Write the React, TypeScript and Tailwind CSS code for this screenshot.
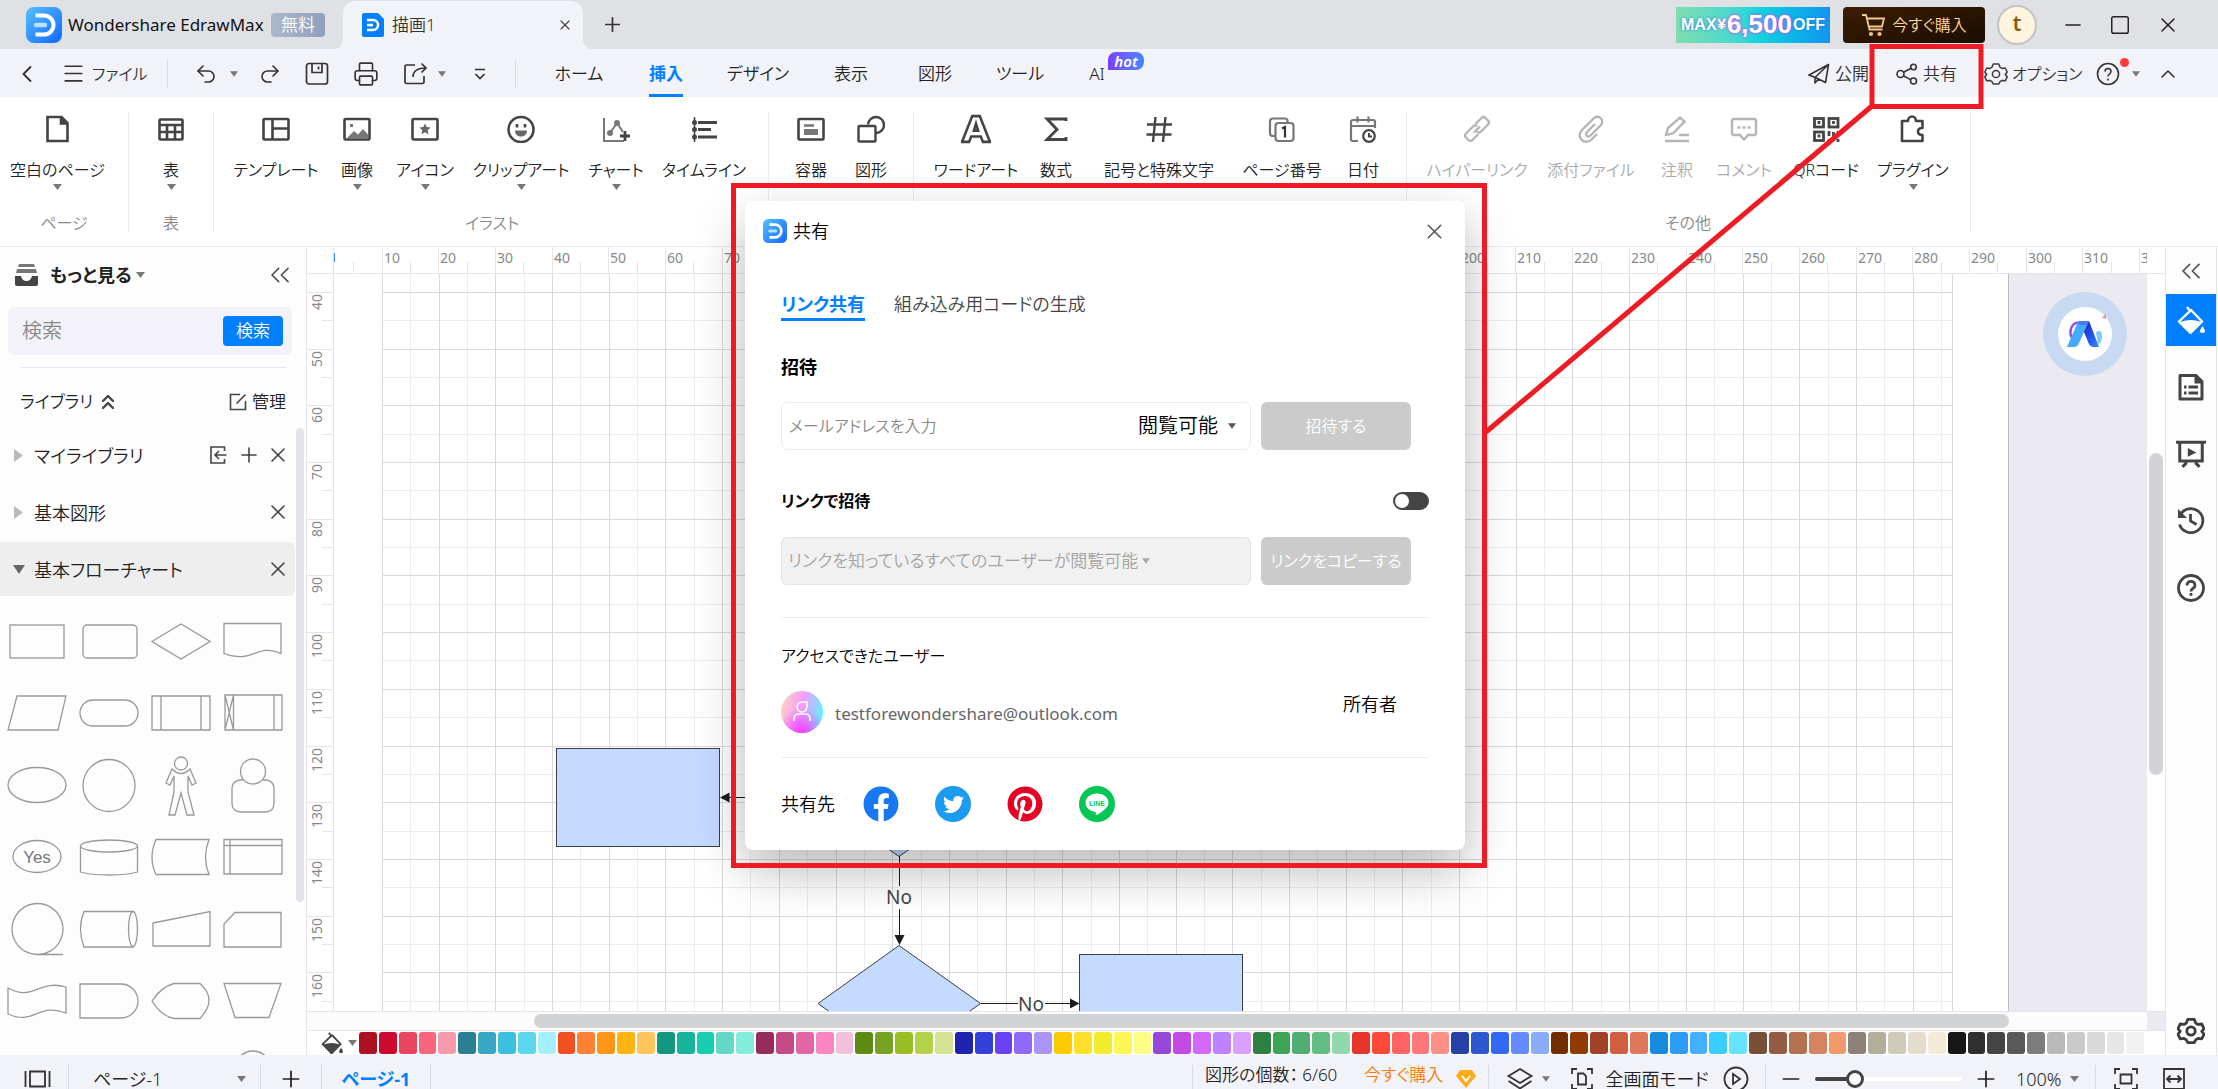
import React from 'react';
import {
  ChevronLeft, ChevronsLeft, ChevronsUp, ChevronUp, Menu, Minus, Plus, Printer, Redo2, Square, Undo2, X,
} from 'lucide-react';
import { FaFacebook, FaPinterest, FaTwitter } from 'react-icons/fa';

type Children = { children: React.ReactNode };

/* ---------- small shared pieces ---------- */

function Caret({ small = false, color = '#777' }: { small?: boolean; color?: string }) {
  return (
    <svg width={small ? 8 : 9} height={6} viewBox="0 0 9 6" className="shrink-0" aria-hidden="true">
      <path d="M0 0h9L4.5 6z" fill={color} />
    </svg>
  );
}

function Divider() {
  return <div className="h-7 w-px shrink-0 bg-[#d9dade]" />;
}

function Logo({ size }: { size: number }) {
  return (
    <svg width={size} height={size} viewBox="0 0 36 36" className="shrink-0" aria-hidden="true">
      <defs>
        <linearGradient id="logoFill" x1="0" y1="0" x2="1" y2="1">
          <stop offset="0" stopColor="#55bfff" />
          <stop offset="1" stopColor="#1168ff" />
        </linearGradient>
      </defs>
      <rect width="36" height="36" rx="8" fill="url(#logoFill)" />
      <path d="M9.500 8.500H18a9.500 9.500 0 0 1 0 19H9.500" fill="none" stroke="#fff" strokeWidth="4" />
      <path d="M10 18h9" stroke="#b9e0ff" strokeWidth="4.500" strokeLinecap="round" />
    </svg>
  );
}

function Glyph({ children, size = 28, color = '#444', width = 2.6 }: Children & { size?: number; color?: string; width?: number }) {
  return (
    <svg
      width={size}
      height={size}
      viewBox="0 0 28 28"
      fill="none"
      stroke={color}
      strokeWidth={width}
      className="shrink-0"
      aria-hidden="true"
    >
      {children}
    </svg>
  );
}

const gearPath =
  'M10.500 2h7l1.500 4 2.500 1.500 4-.5 2.500 5-2.500 3v0l2.500 3-2.500 5-4-.5L19 24l-1.500 3h-7L9 24l-2.500-1.500-4 .5L0 18l2.500-3L0 12l2.500-5 4 .5L9 6z';

function Gear({ size = 24, width = 2 }: { size?: number; width?: number }) {
  return (
    <svg width={size} height={size} viewBox="-1 0 30 29" fill="none" stroke="#3c3c3c" strokeWidth={width} strokeLinejoin="round" className="shrink-0" aria-hidden="true">
      <path d={gearPath} />
      <circle cx="14" cy="14.500" r="4.500" />
    </svg>
  );
}

/* ---------- title bar ---------- */

function TitleBar() {
  return (
    <header className="flex h-[49px] shrink-0 items-center bg-[#e0e1e5] pl-[26px]">
      <Logo size={36} />
      <span className="ml-[6px] w-[196px] text-[17px] font-normal whitespace-nowrap text-[#111]">Wondershare EdrawMax</span>
      <span className="ml-[7px] flex h-6 w-[54px] items-center justify-center rounded bg-linear-to-r from-[#a9b9cb] to-[#8f9fbe] text-[17px] text-white">
        無料
      </span>
      <div className="relative ml-[18px] mt-px flex h-12 w-[240px] items-center rounded-t-xl bg-[#f2f3f9] pl-[19px] pr-[10px]">
        <svg className="absolute bottom-0 -left-2" width="8" height="8" viewBox="0 0 8 8" aria-hidden="true"><path d="M8 0v8H0q6-1 8-8z" fill="#f2f3f9" /></svg>
        <svg className="absolute -right-2 bottom-0" width="8" height="8" viewBox="0 0 8 8" aria-hidden="true"><path d="M0 0v8h8q-6-1-8-8z" fill="#f2f3f9" /></svg>
        <svg width="22" height="24" viewBox="0 0 22 24" aria-hidden="true">
          <path d="M2 0h14l6 6v16q0 2-2 2H2q-2 0-2-2V2q0-2 2-2z" fill="#0080ff" />
          <path d="M5 7h6a5 5 0 0 1 0 10H5M5 12h6" fill="none" stroke="#fff" strokeWidth="2.500" />
        </svg>
        <span className="ml-2 flex-1 text-[17px] text-[#333]">描画1</span>
        <button aria-label="タブを閉じる"><X size={16} strokeWidth={1.8} color="#444" /></button>
      </div>
      <button aria-label="新しいタブ" className="ml-[18px]"><Plus size={23} strokeWidth={1.8} color="#333" /></button>
      <div className="flex-1" />
      <a href="#sale" className="flex h-9 w-[154px] items-center justify-center gap-px overflow-hidden bg-linear-to-r from-[#7fdcae] via-[#18d8dc] to-[#1593f0] font-['Liberation_Sans_Narrow','Liberation_Sans',sans-serif] font-bold text-white">
        <span className="text-[16px] [text-shadow:0_0_3px_#1a6fe0]">MAX</span>
        <span className="text-[15px] [text-shadow:0_0_3px_#e03ce0]">¥</span>
        <span className="text-[26px] [text-shadow:0_0_3px_#e83cf0,0_0_2px_#e83cf0]">6,500</span>
        <span className="text-[16px] [text-shadow:0_0_3px_#1a6fe0]">OFF</span>
      </a>
      <button className="ml-[13px] flex h-9 w-[142px] items-center justify-center gap-[6px] rounded bg-linear-to-br from-[#3c1d02] to-[#1a0d01] text-[16px] text-[#ffd49a]">
        <svg width="25" height="25" viewBox="0 0 25 25" fill="none" stroke="#f5c78c" strokeWidth="1.800" aria-hidden="true">
          <path d="M1 3h4l3.500 14.500h13M5.500 6.500H23l-2 8H8" />
          <circle cx="10" cy="22" r="1.200" /><circle cx="18.500" cy="22" r="1.200" />
        </svg>
        今すぐ購入
      </button>
      <button className="ml-3 flex size-10 items-center justify-center rounded-full border-2 border-[#c4c4c6] bg-[#fdf5dd] pb-1 text-[22px] font-semibold text-[#8a5a16]">
        t
      </button>
      <button aria-label="最小化" className="ml-6"><Minus size={24} strokeWidth={1.6} color="#222" /></button>
      <button aria-label="最大化" className="ml-6"><Square size={22} strokeWidth={1.6} color="#222" /></button>
      <button aria-label="閉じる" className="mr-[38px] ml-[25px]"><X size={24} strokeWidth={1.5} color="#222" /></button>
    </header>
  );
}

/* ---------- menu bar ---------- */

const menuTabs: { label: string; cell: string; active?: boolean; hot?: boolean }[] = [
  { label: 'ホーム', cell: 'w-[86px]' },
  { label: '挿入', cell: 'w-[88px]', active: true },
  { label: 'デザイン', cell: 'w-[96px]' },
  { label: '表示', cell: 'w-[90px]' },
  { label: '図形', cell: 'w-[78px]' },
  { label: 'ツール', cell: 'w-[92px]' },
  { label: 'AI', cell: 'w-[62px]', hot: true },
];

function MenuBar() {
  return (
    <nav className="flex h-12 shrink-0 items-center bg-[#f2f3f9] pt-px pl-[13px] text-[17px] text-[#333]">
      <button aria-label="戻る"><ChevronLeft size={28} strokeWidth={1.6} /></button>
      <button className="ml-5 flex w-[88px] items-center gap-[6px] text-[16px] whitespace-nowrap">
        <Menu size={25} strokeWidth={1.6} className="shrink-0" />ファイル
      </button>
      <div className="flex-none basis-[18px]" />
      <Divider />
      <button className="ml-[26px] flex items-center gap-3" aria-label="元に戻す">
        <Undo2 size={24} strokeWidth={1.6} /><Caret small />
      </button>
      <button className="ml-5" aria-label="やり直し"><Redo2 size={24} strokeWidth={1.6} /></button>
      <button className="ml-[23px]" aria-label="保存">
        <svg width="24" height="24" viewBox="0 0 24 24" fill="none" stroke="#333" strokeWidth="1.700" aria-hidden="true">
          <rect x="1.500" y="1.500" width="21" height="20.500" rx="2.500" /><path d="M7 2v8.500h10V2M13.500 4.500v3" />
        </svg>
      </button>
      <button className="ml-6" aria-label="印刷"><Printer size={26} strokeWidth={1.5} /></button>
      <button className="ml-6 flex items-center gap-[9px]" aria-label="エクスポート">
        <svg width="26" height="24" viewBox="0 0 26 24" fill="none" stroke="#333" strokeWidth="1.700" aria-hidden="true">
          <path d="M12 3H3.500q-1.500 0-1.500 1.500V20q0 1.500 1.500 1.500h16q1.500 0 1.500-1.500v-6M10 15c0-6 5-9 13-9M18.500 1.500L23 6l-4.500 4.500" />
        </svg>
        <Caret small />
      </button>
      <button className="ml-[27px]" aria-label="クイックアクセス">
        <svg width="14" height="14" viewBox="0 0 14 14" fill="none" stroke="#333" strokeWidth="1.700" aria-hidden="true">
          <path d="M2 2.500h10M2.500 7L7 11.500 11.500 7" />
        </svg>
      </button>
      <div className="flex-none basis-7" />
      <Divider />
      <div className="ml-5 flex h-full">
        {menuTabs.map((t) => (
          <button key={t.label} className={`relative flex h-full items-center justify-center whitespace-nowrap ${t.cell}`}>
            <span
              className={
                t.active
                  ? 'flex h-full items-center border-b-[3px] border-[#0080ff] pt-[3px] font-bold text-[#0080ff]'
                  : 'text-[#222]'
              }
            >
              {t.label}
            </span>
            {t.hot && (
              <span className="absolute top-[2px] left-[42px] flex h-[18px] w-9 items-center justify-center rounded-lg rounded-bl-none bg-linear-to-r from-[#7a3cff] to-[#3f86ff] text-[15px] font-semibold text-white italic">
                hot
              </span>
            )}
          </button>
        ))}
      </div>
      <div className="flex-1" />
      <button className="flex items-center gap-[5px] whitespace-nowrap">
        <svg width="22" height="22" viewBox="0 0 22 22" fill="none" stroke="#333" strokeWidth="1.600" strokeLinejoin="round" aria-hidden="true">
          <path d="M20.500 1.500L1 12l6 2.500 13.500-13L17.500 19.500l-7-3.500M7 14.500V20l3.500-4z" />
        </svg>
        公開
      </button>
      <button className="ml-[26px] flex items-center gap-1 whitespace-nowrap">
        <svg width="24" height="24" viewBox="0 0 24 24" fill="none" stroke="#333" strokeWidth="1.600" aria-hidden="true">
          <circle cx="5.500" cy="12" r="3.500" /><circle cx="18.500" cy="5" r="2.800" /><circle cx="18.500" cy="19" r="3" />
          <path d="M8.500 10.200L16 6.300M8.500 14l7.300 3.600" />
        </svg>
        共有
      </button>
      <button className="ml-[27px] flex w-[100px] items-center gap-1 text-[16px] whitespace-nowrap">
        <Gear size={24} width={1.900} />オプション
      </button>
      <button className="relative ml-3 flex items-center gap-3" aria-label="ヘルプ">
        <svg width="24" height="24" viewBox="0 0 24 24" fill="none" stroke="#333" strokeWidth="1.600" aria-hidden="true">
          <circle cx="12" cy="12" r="10.500" /><path d="M9 9.500c0-4 6-4 6 0 0 2.500-3 2.500-3 5M12 16.500v2" />
        </svg>
        <Caret small />
        <span className="absolute -top-1 left-[24px] size-[9px] rounded-full bg-[#ff3b3b]" />
      </button>
      <button className="mr-[38px] ml-4" aria-label="リボンを折りたたむ"><ChevronUp size={24} strokeWidth={1.6} /></button>
    </nav>
  );
}

/* ---------- ribbon ---------- */

type Tool = { label: string; cell: string; icon: React.ReactNode; menu?: boolean; off?: boolean };

const grey = '#b5b5b5';

const ribbonGroups: { name: string; box: string; tools: Tool[] }[] = [
  {
    name: 'ページ', box: 'w-[129px] pl-0',
    tools: [{
      label: '空白のページ', cell: 'w-[115px]', menu: true,
      icon: <Glyph><path d="M3.500 2h14l6 6v18h-20z" /><path d="M17 2v6.500h6" fill="#444" /></Glyph>,
    }],
  },
  {
    name: '表', box: 'w-[85px] pl-3',
    tools: [{
      label: '表', cell: 'w-[60px]', menu: true,
      icon: <Glyph><rect x="2.500" y="4.500" width="23" height="20" rx="1" /><path d="M2 10h24M2 17h24M10 10v15M18 10v15" /></Glyph>,
    }],
  },
  {
    name: 'イラスト', box: 'w-[555px] pl-[18px]',
    tools: [
      { label: 'テンプレート', cell: 'w-[88px]', icon: <Glyph><rect x="1.500" y="4" width="25" height="20.500" rx="1" /><path d="M10.500 4v20M10.500 13.500h16" /></Glyph> },
      {
        label: '画像', cell: 'w-[74px]', menu: true,
        icon: <Glyph><rect x="1.500" y="4" width="25" height="20.500" rx="1" /><path d="M4 23l7-7 4 3.500 5-5.500 5 5.500V23z" fill="#777" stroke="none" /><rect x="7" y="9" width="3" height="3" fill="#777" stroke="none" /></Glyph>,
      },
      {
        label: 'アイコン', cell: 'w-[62px]', menu: true,
        icon: <Glyph><rect x="1.500" y="4" width="25" height="20.500" rx="1" /><path d="M14 8.500l1.700 3.600 3.900.5-2.900 2.700.8 3.900-3.500-1.900-3.500 1.900.8-3.900-2.900-2.700 3.900-.5z" fill="#666" stroke="none" /></Glyph>,
      },
      {
        label: 'クリップアート', cell: 'w-[130px]', menu: true,
        icon: <Glyph><circle cx="14" cy="14.500" r="12.500" /><path d="M8 15.500h12c0 8-12 8-12 0z" fill="#666" stroke="none" /><path d="M10 9v3.500M18 9v3.500" /></Glyph>,
      },
      {
        label: 'チャート', cell: 'w-[60px]', menu: true,
        icon: <Glyph color="#777" width={2}><path d="M2 3v23h20M8 18l7-10 6 9" /><circle cx="8" cy="18" r="2" fill="#777" /><circle cx="15" cy="8" r="2" fill="#777" /><path d="M23 16v10M18 21h10" stroke="#444" strokeWidth="2.800" /></Glyph>,
      },
      {
        label: 'タイムライン', cell: 'w-[116px]',
        icon: <Glyph><path d="M4.500 2v25" strokeWidth="1.600" /><path d="M8 7.500h19M8 14.500h13M8 22h19" strokeWidth="3" /><g fill="#444" stroke="none"><circle cx="4.500" cy="7.500" r="2.500" /><circle cx="4.500" cy="14.500" r="2.500" /><circle cx="4.500" cy="22" r="2.500" /></g></Glyph>,
      },
    ],
  },
  {
    name: '', box: 'w-[145px] pl-3',
    tools: [
      { label: '容器', cell: 'w-[60px]', icon: <Glyph><rect x="1.500" y="4" width="25" height="20.500" rx="1" /><path d="M7 10.500h10" stroke="#777" /><path d="M7 14h14v6H7z" fill="#777" stroke="none" /></Glyph> },
      { label: '図形', cell: 'w-[60px]', icon: <Glyph width={2.4}><path d="M11 9.500a8 8 0 1 1 8 8.500" /><rect x="1.500" y="11" width="17" height="15.500" rx="1" /></Glyph> },
    ],
  },
  {
    name: '', box: 'w-[493px] pl-[17px]',
    tools: [
      { label: 'ワードアート', cell: 'w-[90px]', icon: <Glyph size={30} width={2.4}><path d="M10.500 2h7L27 26h-6.500l-2-5h-9l-2 5H1zM12 15.500h4L14 9z" /></Glyph> },
      { label: '数式', cell: 'w-[70px]', icon: <Glyph width={2.8}><path d="M24 6V4H5l10 10.500L5 24.500h19v-2.500" /></Glyph> },
      { label: '記号と特殊文字', cell: 'w-[136px]', icon: <Glyph width={2.4}><path d="M2 9.500h25M1.500 19.500h25M10.500 2L8 27M20.500 2L18 27" /></Glyph> },
      {
        label: 'ページ番号', cell: 'w-[110px]',
        icon: <Glyph color="#777" width={2.2}><path d="M7 21H5q-3 0-3-3V6.500q0-3 3-3h12q2.500 0 2.500 2.500v1" /><rect x="7.500" y="8" width="18" height="18" rx="3" /><path d="M14 13.500l3-1.500v10.500" stroke="#333" /></Glyph>,
      },
      {
        label: '日付', cell: 'w-[52px]',
        icon: <Glyph color="#777" width={2.2}><path d="M9 26H4q-2 0-2-2V7q0-2 2-2h20q2 0 2 2v6M2 11h24M8.500 1.500v6M19.500 1.500v6" /><circle cx="20" cy="21" r="5.800" stroke="#444" /><path d="M20 18v3.500h3" stroke="#444" strokeWidth="2" /></Glyph>,
      },
    ],
  },
  {
    name: 'その他', box: 'w-[564px] pl-[15px]',
    tools: [
      { label: 'ハイパーリンク', cell: 'w-[110px]', off: true, icon: <Glyph color={grey} width={2.4}><path d="M12.500 9l6-6q2-2 4 0l2.500 2.500q2 2 0 4l-7 7q-2 2-4 0M15.500 19l-6 6q-2 2-4 0L3 22.500q-2-2 0-4l7-7q2-2 4 0" /><path d="M11 17.500l6-6" /></Glyph> },
      { label: '添付ファイル', cell: 'w-[118px]', off: true, icon: <Glyph color={grey} width={2.4}><path d="M18 9l-8 8c-2.500 2.500 1 6 3.500 3.500L23.500 10.500c5-5-2-12-7-7L5 15c-7 7 3 16 9.500 9.500L20 19" /></Glyph> },
      { label: '注釈', cell: 'w-[54px]', off: true, icon: <Glyph color={grey} width={2.4}><path d="M3 20l2-7L17 2.500l4.500 4L10 18.500zM16 20h10M2 26h24" /></Glyph> },
      { label: 'コメント', cell: 'w-[80px]', off: true, icon: <Glyph color={grey} width={2.4}><path d="M4 4h20q2 0 2 2v12q0 2-2 2h-6l-4 4.500L10 20H4q-2 0-2-2V6q0-2 2-2z" /><path d="M7.500 12.500h3M12.500 12.500h3M17.500 12.500h3" /></Glyph> },
      {
        label: 'QRコード', cell: 'w-[84px]',
        icon: <Glyph width={2.8}><rect x="2.500" y="3.500" width="9" height="8.500" /><rect x="17" y="3.500" width="9" height="8.500" /><rect x="2.500" y="17" width="9" height="8.500" /><path d="M7 6v3M21.500 6v3M7 19.500v3M17 16v5M26 16v5M21.500 17v9M17 24v3M26 24v3" /></Glyph>,
      },
      {
        label: 'プラグイン', cell: 'w-[90px]', menu: true,
        icon: <Glyph><path d="M3 6h6c0-6 8-6 8 0h6.500v7c-6 0-6 7 0 7v6H3z" strokeLinejoin="round" /></Glyph>,
      },
    ],
  },
];

function Ribbon() {
  return (
    <section className="flex h-[150px] shrink-0 border-b border-[#e9e9ec] bg-white pt-[15px]" aria-label="挿入">
      {ribbonGroups.map((g, i) => (
        <div key={i} className={`flex h-[120px] shrink-0 flex-col border-r border-[#ececee] ${g.box}`}>
          <div className="flex">
            {g.tools.map((t) => (
              <button key={t.label} disabled={t.off} className={`flex flex-col items-center ${t.cell}`}>
                <span className="mt-[3px] flex h-7 items-center">{t.icon}</span>
                <span className={`mt-[15px] text-[16px] leading-6 whitespace-nowrap ${t.off ? 'text-[#aaa]' : 'text-[#222]'}`}>{t.label}</span>
                {t.menu && <span className="mt-[2px]"><Caret /></span>}
              </button>
            ))}
          </div>
          <div className="flex-1" />
          <div className={`-mb-[3px] text-center text-[16px] leading-6 text-[#888] ${i > 1 ? '-ml-4' : i === 1 ? '-ml-3' : ''}`}>{g.name}</div>
        </div>
      ))}
    </section>
  );
}

/* ---------- shape library ---------- */

const libraryShapes: React.ReactNode[] = [
  <rect x="3" y="14" width="54" height="33" />,
  <rect x="4" y="14" width="54" height="33" rx="4" />,
  <path d="M1 30.500L30 13l29 17.500L30 48z" />,
  <path d="M1 12.500h57v30c-24-11-28 11-57 0z" />,
  <path d="M10 13h49l-8 34H1z" />,
  <rect x="1" y="17" width="58" height="26" rx="13" />,
  <path d="M1 13h58v34H1zM10 13v34M50 13v34" />,
  <path d="M2 12h57v35H2zM10.500 12v35M51 12v35M2 12l8.500 35M10.500 12L2 47" />,
  <ellipse cx="30" cy="30" rx="29" ry="17.500" />,
  <circle cx="30" cy="30.500" r="26" />,
  <g><circle cx="30" cy="8.500" r="6.500" /><path d="M21 14l-6 14 4 2 4-9v16l-5 23h6l6-22 6 22h7l-6-23V21l4 9 4-2-6-14q-9 9-18 0z" /></g>,
  <g><circle cx="30" cy="16.500" r="12.500" /><path d="M20 25h-3q-8 1-8 9v14q0 9 9 9h24q9 0 9-9V34q0-8-8-9h-3" /></g>,
  <g><ellipse cx="30" cy="29.500" rx="24" ry="16" /><text x="30" y="36" textAnchor="middle" fill="#777" stroke="none" className="font-['Liberation_Sans',sans-serif] text-[17px]">Yes</text></g>,
  <g><ellipse cx="30" cy="19" rx="28.500" ry="6" /><path d="M1.500 19v26c12 4 45 4 57 0V19" /></g>,
  <path d="M5 12.500h53q-7 18 0 35H5q-8-17 0-35z" />,
  <path d="M1 12.500h58V47H1zM7 12.500V47M1 18.500h58" />,
  <path d="M56 55.500H30a25.500 25.500 0 1 1 1 0" />,
  <g><path d="M55 12.500H5q-7 17 0 35.500h50" /><ellipse cx="54" cy="30" rx="4.500" ry="17.500" /></g>,
  <path d="M2 24l57-11.500V47H2z" />,
  <path d="M12 13.500h46V48H1V25z" />,
  <path d="M1 17c26 14 30-9 58-1v26c-28-11-32 13-58 1z" />,
  <path d="M1 13h41a17 17 0 0 1 0 34H1z" />,
  <path d="M23 12.500h26q18 16 0 35H23Q10 45 1 30q9-14 22-17.500z" />,
  <path d="M1 12.500h57L46 46.500H12z" />,
  null,
  null,
  null,
  <circle cx="30" cy="26" r="18" />,
];

function LibraryRow({ name, open = false, own = false }: { name: string; open?: boolean; own?: boolean }) {
  return (
    <div className={`flex h-[54px] items-center rounded-r-md pr-[6px] pl-[13px] ${open ? 'bg-[#eeeeee]' : ''}`}>
      <button className="flex flex-1 items-center text-left text-[18px] text-[#222]" aria-expanded={open}>
        <svg width="13" height="13" viewBox="0 0 13 13" aria-hidden="true">
          {open ? <path d="M0 2h12L6 11z" fill="#666" /> : <path d="M1 0l9 6.500L1 13z" fill="#bbb" />}
        </svg>
        <span className="ml-2 pt-[2px] whitespace-nowrap">{name}</span>
      </button>
      {own && (
        <>
          <button aria-label="インポート" className="mr-[10px]">
            <svg width="18" height="18" viewBox="0 0 18 18" fill="none" stroke="#444" strokeWidth="1.600" aria-hidden="true">
              <path d="M15.500 5V1H2v16h13.500v-4M17.500 9H6M10 5L6 9l4 4" />
            </svg>
          </button>
          <button aria-label="追加" className="mr-[5px]"><Plus size={24} strokeWidth={1.6} color="#444" /></button>
        </>
      )}
      <button aria-label="閉じる"><X size={24} strokeWidth={1.6} color="#444" className="-mr-[1px]" /></button>
    </div>
  );
}

function Library() {
  return (
    <aside className="flex w-[307px] shrink-0 flex-col border-r border-[#e4e4ea] bg-[#fdfdfe]">
      <div className="flex h-[60px] shrink-0 items-center pr-4 pb-1 pl-[15px]">
        <svg width="23" height="24" viewBox="0 0 23 24" fill="#444" aria-hidden="true">
          <path d="M4 1h15l1 3H3zM2 6h19l1 4H1z" fill="#777" />
          <path d="M0 13h6q1 5 5.500 5T17 13h6v8q0 2-2 2H2q-2 0-2-2z" />
        </svg>
        <button className="ml-3 flex items-center gap-1 text-[18px] font-bold text-[#222]">もっと見る<Caret /></button>
        <div className="flex-1" />
        <button aria-label="パネルを閉じる"><ChevronsLeft size={32} strokeWidth={1.3} color="#555" className="-mr-[6px]" /></button>
      </div>
      <form className="mr-[14px] ml-2 flex h-12 shrink-0 items-center rounded-md bg-[#f2f2f8] pr-[9px] pl-[14px]" onSubmit={(e) => e.preventDefault()}>
        <input aria-label="検索" placeholder="検索" className="min-w-0 flex-1 bg-transparent text-[20px] outline-none placeholder:text-[#888]" />
        <button className="h-[30px] w-[60px] rounded bg-[#0080ff] text-[17px] text-white">検索</button>
      </form>
      <div className="mx-5 mt-3 h-px shrink-0 bg-[#e6e6ea]" />
      <div className="flex h-[60px] shrink-0 items-center pt-2 pr-5 pl-5 text-[17px] text-[#222]">
        <button className="flex items-center gap-[3px]">ライブラリ<ChevronsUp size={24} strokeWidth={2.4} color="#444" /></button>
        <div className="flex-1" />
        <button className="flex items-center gap-[5px]">
          <svg width="18" height="18" viewBox="0 0 18 18" fill="none" stroke="#444" strokeWidth="1.600" aria-hidden="true">
            <path d="M11 1.500H1.500v15h15V8M7.500 10.500l9-9" />
          </svg>
          管理
        </button>
      </div>
      <div className="flex min-h-0 flex-1">
        <div className="flex w-[295px] shrink-0 flex-col overflow-hidden">
          <div className="flex shrink-0 flex-col gap-[3px]">
            <LibraryRow name="マイライブラリ" own />
            <LibraryRow name="基本図形" />
            <LibraryRow name="基本フローチャート" open />
          </div>
          <div className="mt-[9px] grid w-[289px] grid-cols-4 pl-px">
            {libraryShapes.map((s, i) => (
              <div key={i} className="flex h-[72px] items-center justify-center">
                <svg width="60" height="62" viewBox="0 -1 60 62" fill="none" stroke="#999" strokeWidth="1.300" aria-hidden="true">{s}</svg>
              </div>
            ))}
          </div>
        </div>
        <div className="ml-px h-[474px] w-2 rounded-full bg-[#e3e3e9]" />
      </div>
    </aside>
  );
}

/* ---------- rulers and canvas ---------- */

const UNIT = 56.69;
const at = (start: number, i: number) => Math.round(start + (i * UNIT) / 2);

function TopRuler() {
  return (
    <svg className="h-full min-w-0 flex-1" aria-hidden="true" shapeRendering="crispEdges">
      <path d="M0.500 6v9" stroke="#2f8bff" strokeWidth="1" />
      {Array.from({ length: 65 }, (_, i) => {
        const x = at(-9, i);
        const major = i % 2 === 0;
        if (x < 4) return null;
        return (
          <g key={i}>
            <path d={`M${x + 0.5} ${major ? 0 : 15}V26`} stroke="#e4e4ea" />
            {major && <text x={x + 2} y="16" fill="#888" className="text-[14px] font-normal">{i * 5}</text>}
          </g>
        );
      })}
    </svg>
  );
}

function SideRuler() {
  return (
    <svg className="h-full w-[26px] shrink-0" aria-hidden="true" shapeRendering="crispEdges">
      {Array.from({ length: 26 }, (_, i) => {
        const y = at(18, i);
        const major = i % 2 === 0;
        return (
          <g key={i}>
            <path d={`M${major ? 0 : 15} ${y + 0.5}H26`} stroke="#e4e4ea" />
            {major && (
              <text transform={`translate(15 ${y + 2}) rotate(-90)`} textAnchor="end" fill="#888" className="text-[14px] font-normal">
                {40 + i * 5}
              </text>
            )}
          </g>
        );
      })}
    </svg>
  );
}

function Canvas() {
  return (
    <div className="relative min-w-0 flex-1 overflow-hidden bg-[#ebeaf0]">
      <svg className="absolute top-0 left-0" width="1675" height="900" aria-label="フローチャート">
        <rect x="0" y="0" width="1675" height="900" fill="#fff" />
        <g shapeRendering="crispEdges">
          {Array.from({ length: 28 }, (_, i) => (
            <path key={`vm${i}`} d={`M${at(48, i * 2 + 1) + 0.5} 0V900`} stroke="#ededf0" />
          ))}
          {Array.from({ length: 14 }, (_, i) => (
            <path key={`hm${i}`} d={`M48 ${at(18, i * 2 + 1) + 0.5}H1619`} stroke="#ededf0" />
          ))}
          {Array.from({ length: 28 }, (_, i) => (
            <path key={`v${i}`} d={`M${at(48, i * 2) + 0.5} 0V900`} stroke="#d9d9db" />
          ))}
          {Array.from({ length: 14 }, (_, i) => (
            <path key={`h${i}`} d={`M48 ${at(18, i * 2) + 0.5}H1619`} stroke="#d9d9db" />
          ))}
          <path d="M1618.500 0V900" stroke="#d9d9db" />
          <path d="M1674.500 0V900" stroke="#bdbdc2" />
        </g>
        <g fill="#c5daff" stroke="#3b3f46" strokeWidth="1">
          <rect x="222.500" y="474.500" width="163" height="98" />
          <rect x="745.500" y="680.500" width="163" height="98" />
          <path d="M484 525.500l81-58 81 58-81 57z" />
          <path d="M484 729.500l81-58 81.500 58-81.500 58z" />
        </g>
        <g stroke="#1b1b1b" fill="#1b1b1b">
          <path d="M395 523.500h30M565.500 582v30M565.500 635v30M647 729.500h37M711 729.500h30" fill="none" />
          <path d="M386 523.500l9.500-5v10zM565.500 671l-5-10h10zM745.500 729.500l-9.500-5v10z" stroke="none" />
        </g>
        <g fill="#444" textAnchor="middle" className="text-[19px] font-normal">
          <text x="565" y="630">No</text>
          <text x="697" y="737">No</text>
        </g>
      </svg>
      <button aria-label="AIアシスタント" className="absolute top-[18px] right-5 flex size-[84px] items-center justify-center rounded-full bg-[#c8daf2]">
        <svg width="54" height="54" viewBox="0 0 54 54" aria-hidden="true">
          <defs>
            <linearGradient id="assistant" x1="0" y1="0" x2="1" y2="1">
              <stop offset="0" stopColor="#1a10c8" /><stop offset="1" stopColor="#2f8cff" />
            </linearGradient>
          </defs>
          <circle cx="27" cy="27" r="27" fill="#fff" />
          <path d="M20 15.500c-7 1-9 9-6.500 15" fill="none" stroke="#a04bf0" strokeWidth="2.500" />
          <path d="M38 25q6-3 6 4t-4 8z" fill="#7cc8ff" />
          <path d="M24 14h7l10 26h-5q-4 0-5.500-4L24 20z" fill="url(#assistant)" />
          <path d="M21 14h10L21 36q-1.500 4-5 4H9l10-23q1-3 2-3z" fill="#42aaff" />
          <path d="M21 14h10l-2 4h-9z" fill="#4a7bff" />
          <path d="M44 11l4-5v6z" fill="#ff8fb0" />
        </svg>
      </button>
    </div>
  );
}

/* ---------- colour strip ---------- */

const swatches = (
  'ad1020 cc0a2f e94560 f9657d f99aac 2a7f94 36a8c4 3dbfe0 5dd6f0 a5f0ff f25022 ff7f35 ff9518 ffb414 ffc55c ' +
  '14977f 16b49b 17ceb0 63d8c4 84ecda 962c5e c44a88 e266a6 f985c2 f2c0dc 5d8a10 75a323 9abf25 b3d24a d3e391 ' +
  '1f24b0 3440d9 6b41f5 8f6af9 ab93f8 fcca00 fde02c f3ec2c fbf755 fdfd85 9648d8 c44ae6 d468fb be82ff dba0ff ' +
  '2e8040 3da455 50ae73 63bd85 92d8ac e7352c ff493b ff6262 ff7779 ff9088 2441a6 2d56d0 3268f4 658cff 88adf6 ' +
  '722e02 913a03 a24128 d15f41 e1775a 178bdc 2c9cf6 42b0ff 3acdff 66e3ff 774f37 945c43 b3714f d4855f f39a6c ' +
  '8b8177 b3ad9b d0cbb9 e4dccd f3ebd7 171717 2f2f2f 444444 595959 7c7c7c b9b9b9 c9c9c9 d9d9d9 e6e6e6 f2f2f2'
).split(' ');

function Bucket({ size, color }: { size: number; color: string }) {
  return (
    <svg width={size} height={size} viewBox="0 0 28 28" fill="none" stroke={color} strokeWidth="2.400" aria-hidden="true">
      <path d="M10 1l4 5M2 15.500L14 4l11 11.500L13.500 27z" strokeLinejoin="round" />
      <path d="M3 16q11-4 21 0L13.500 26.500z" fill={color} stroke="none" />
      <path d="M25.500 20q5 7 0 7t0-7z" fill={color} stroke="none" />
    </svg>
  );
}

function ColourStrip() {
  return (
    <div className="flex h-[25px] shrink-0 items-start border-t border-[#e4e4ea] bg-white pt-px">
      <button className="ml-[14px] flex w-[38px] shrink-0 items-center gap-[5px]" aria-label="塗りつぶし">
        <Bucket size={22} color="#444" /><Caret />
      </button>
      <div className="flex min-w-0 flex-1">
        {swatches.map((c, i) => (
          <button key={i} aria-label={`#${c}`} className="mr-[2px] h-[22px] min-w-0 flex-1 rounded-[3px]" style={{ backgroundColor: `#${c}` }} />
        ))}
      </div>
      <div className="w-[18px] shrink-0" />
    </div>
  );
}

function Workspace() {
  return (
    <main className="flex min-w-0 flex-1 flex-col bg-white">
      <div className="flex h-[27px] shrink-0 border-b border-[#e4e4ea]">
        <div className="w-[27px] shrink-0 border-r border-[#e4e4ea]" />
        <TopRuler />
        <div className="w-[18px] shrink-0" />
      </div>
      <div className="flex min-h-0 flex-1">
        <div className="flex w-[27px] shrink-0 overflow-hidden border-r border-[#e4e4ea]"><SideRuler /></div>
        <Canvas />
        <div className="flex w-[18px] shrink-0 justify-center pt-[179px]">
          <div className="h-[322px] w-[14px] rounded-full bg-[#d2d3d5]" />
        </div>
      </div>
      <div className="flex h-[19px] shrink-0 items-center border-t border-[#e4e4ea] bg-[#fcfcfd] pl-[227px]">
        <div className="mr-[138px] h-[14px] flex-1 rounded-full bg-[#d2d3d5]" />
        <div className="h-full w-[18px] bg-[#ebeaf0]" />
      </div>
      <ColourStrip />
    </main>
  );
}

/* ---------- right rail ---------- */

function RightRail() {
  return (
    <aside className="mr-px flex w-[52px] shrink-0 flex-col items-center border-x border-[#e4e4ea] bg-[#fdfdfe]">
      <button aria-label="パネルを開く" className="flex h-[47px] items-center"><ChevronsLeft size={32} strokeWidth={1.3} color="#555" /></button>
      <button aria-label="スタイル" className="flex h-[52px] w-full items-center justify-center bg-[#007fff]"><Bucket size={28} color="#fff" /></button>
      <button aria-label="ページ設定" className="mt-[27px]">
        <Glyph width={3}><path d="M3 2.500h16l6 6V26H3z" strokeLinejoin="round" /><path d="M19 2.500V9h6" fill="#444" /><path d="M11.500 14H21M11.500 20H21M7 14h2.500M7 20h2.500" /></Glyph>
      </button>
      <button aria-label="プレゼンテーション" className="mt-[38px]">
        <Glyph size={30} width={2.8}><path d="M0 3h28M3.500 3v17.500h21V3M10 22l-4 4M18 22l4 4" /><path d="M11 8.500l8 4-8 4z" fill="#444" stroke="none" /></Glyph>
      </button>
      <button aria-label="履歴" className="mt-[37px]">
        <Glyph width={2.800}><path d="M3 9.500a12 12 0 1 1-.5 9M13.500 8v7l6 3.500" /><path d="M1 3v9h9z" fill="#444" stroke="none" /></Glyph>
      </button>
      <button aria-label="ヘルプ" className="mt-10">
        <Glyph width={2.800}><circle cx="14" cy="14" r="12.500" /><path d="M10 11.500c0-5.500 8-5.500 8 0 0 3-4 2.500-4 6M14 19v2.800" /></Glyph>
      </button>
      <div className="flex-1" />
      <button aria-label="設定" className="mb-[10px]"><Gear size={28} width={3} /></button>
    </aside>
  );
}

/* ---------- status bar ---------- */

function StatusBar() {
  return (
    <footer className="h-[34px] shrink-0 overflow-hidden bg-[#f2f3f9]">
      <div className="flex h-12 items-center text-[18px] whitespace-nowrap text-[#222]">
        <button aria-label="表示切替" className="ml-6">
          <svg width="27" height="18" viewBox="0 0 27 18" fill="none" stroke="#333" strokeWidth="1.800" aria-hidden="true">
            <path d="M1.500 1v16M25.500 1v16M6 1.500h15v15H6z" />
          </svg>
        </button>
        <div className="basis-[17px]" />
        <Divider />
        <button className="flex w-[191px] items-center justify-between pr-[14px] pl-6">ページ-1<Caret /></button>
        <Divider />
        <button aria-label="ページを追加" className="flex w-[60px] justify-center"><Plus size={26} strokeWidth={1.6} /></button>
        <Divider />
        <button className="w-[108px] text-center font-bold text-[#0080ff]">ページ-1</button>
        <Divider />
        <div className="flex-1" />
        <Divider />
        <div className="flex w-[295px] items-center gap-3 pb-2 pl-3 text-[17px]">
          <span className="w-[147px]">図形の個数： 6/60</span>
          <a href="#buy" className="w-20 text-[#ff7a00]">今すぐ購入</a>
          <svg width="20" height="18" viewBox="0 0 20 18" className="mt-2" aria-hidden="true">
            <path d="M4 0h12l4 6-10 12L0 6z" fill="#ffab1a" /><path d="M6 6l4 5 4-5" fill="none" stroke="#fff" strokeWidth="2" />
          </svg>
        </div>
        <Divider />
        <button aria-label="レイヤー" className="ml-[17px] flex items-center gap-2">
          <svg width="28" height="24" viewBox="0 0 28 24" fill="none" stroke="#333" strokeWidth="1.800" aria-hidden="true">
            <path d="M14 2l11.500 7L14 16 2.500 9zM2.500 14L14 21.500 25.500 14" />
          </svg>
          <Caret small />
        </button>
        <button className="ml-[21px] flex items-center gap-3">
          <svg width="22" height="22" viewBox="0 0 22 22" fill="none" stroke="#333" strokeWidth="1.800" aria-hidden="true">
            <path d="M6 1H1v5M16 1h5v5M6 21H1v-5M16 21h5v-5M7 5.500h5.500L15 8v8.500H7z" />
          </svg>
          <span className="w-[104px]">全画面モード</span>
        </button>
        <button aria-label="再生" className="ml-[14px]">
          <svg width="26" height="26" viewBox="0 0 26 26" fill="none" stroke="#333" strokeWidth="1.800" aria-hidden="true">
            <circle cx="13" cy="13" r="11.500" /><path d="M10 8l7 5-7 5z" />
          </svg>
        </button>
        <div className="basis-4" />
        <Divider />
        <button aria-label="縮小" className="ml-3"><Minus size={26} strokeWidth={1.600} /></button>
        <input
          type="range"
          aria-label="ズーム"
          min={0}
          max={100}
          defaultValue={24}
          className="mx-[11px] h-1 w-[147px] appearance-none rounded-full bg-linear-to-r from-[#444] from-25% to-white to-25% [&::-webkit-slider-thumb]:size-[18px] [&::-webkit-slider-thumb]:appearance-none [&::-webkit-slider-thumb]:rounded-full [&::-webkit-slider-thumb]:border-[3px] [&::-webkit-slider-thumb]:border-[#444] [&::-webkit-slider-thumb]:bg-white"
        />
        <button aria-label="拡大"><Plus size={26} strokeWidth={1.600} /></button>
        <button className="ml-[17px] flex w-[63px] items-center justify-between">100%<Caret /></button>
        <div className="basis-4" />
        <Divider />
        <button aria-label="ページに合わせる" className="ml-[18px]">
          <svg width="24" height="22" viewBox="0 0 24 22" fill="none" stroke="#333" strokeWidth="1.800" aria-hidden="true">
            <path d="M6 1H1v5M18 1h5v5M6 21H1v-5M18 21h5v-5M6.500 6.500h11v9h-11z" />
          </svg>
        </button>
        <button aria-label="幅に合わせる" className="mr-[33px] ml-[25px]">
          <svg width="22" height="22" viewBox="0 0 22 22" fill="none" stroke="#333" strokeWidth="1.800" aria-hidden="true">
            <path d="M1 1h20v20H1zM4 11h14M7.500 7.500L4 11l3.500 3.500M14.500 7.500L18 11l-3.500 3.500" />
          </svg>
        </button>
      </div>
    </footer>
  );
}

/* ---------- share dialog ---------- */

function LineLogo() {
  return (
    <svg width="36" height="36" viewBox="0 0 36 36" aria-hidden="true">
      <circle cx="18" cy="18" r="18" fill="#06c755" />
      <path d="M18 7.500c-6.500 0-11.500 4-11.500 9.200 0 4.600 4 8.200 9.500 9 1.500.3.500 3 .9 3.500.7.300 6.500-3.500 9.600-6.500 2-2 3-3.800 3-6C29.500 11.500 24.500 7.500 18 7.500z" fill="#fff" />
      <text x="18" y="19.500" textAnchor="middle" fill="#06c755" className="font-['Liberation_Sans',sans-serif] text-[7px] font-bold">LINE</text>
    </svg>
  );
}

function ShareDialog() {
  return (
    <section role="dialog" aria-label="共有" className="absolute top-[201px] left-[745px] flex w-[720px] flex-col rounded-lg bg-white pb-7 text-[16px] text-black shadow-[0_20px_50px_rgba(0,0,0,0.28)]">
      <div className="flex h-[60px] items-center px-[18px]">
        <Logo size={24} />
        <span className="ml-[6px] flex-1 text-[18px]">共有</span>
        <button aria-label="閉じる"><X size={25} strokeWidth={1.5} color="#555" /></button>
      </div>
      <div className="px-9">
        <div className="mt-[25px] flex gap-[29px] text-[18px] leading-7" role="tablist">
          <button role="tab" aria-selected="true" className="border-b-[3px] border-[#0080ff] pt-1 font-bold text-[#0080ff]">リンク共有</button>
          <button role="tab" aria-selected="false" className="pt-1 pb-[3px] text-[#444]">組み込み用コードの生成</button>
        </div>
        <label htmlFor="mail" className="mt-8 block text-[18px] leading-7 font-bold">招待</label>
        <div className="mt-[21px] flex gap-[10px]">
          <div className="flex h-12 w-[470px] items-center rounded-md border border-[#ebebeb] pl-[7px]">
            <input id="mail" type="email" placeholder="メールアドレスを入力" className="min-w-0 flex-1 outline-none placeholder:text-[#888]" />
            <select aria-label="権限" className="w-[90px] appearance-none bg-white text-[20px] outline-none">
              <option>閲覧可能</option>
            </select>
            <span className="w-[22px]"><Caret small color="#555" /></span>
          </div>
          <button className="h-12 w-[150px] rounded-md bg-[#cbcbcb] text-white">招待する</button>
        </div>
        <div className="mt-[37px] flex h-7 items-center justify-between">
          <label htmlFor="link-toggle" className="font-bold">リンクで招待</label>
          <input
            id="link-toggle"
            type="checkbox"
            role="switch"
            className="h-[18px] w-9 appearance-none rounded-full border-2 border-[#444] bg-[#444] before:block before:size-[14px] before:rounded-full before:bg-white"
          />
        </div>
        <div className="mt-[22px] flex gap-[10px]">
          <div className="flex h-12 w-[470px] items-center rounded-md border border-[#e5e5e5] bg-[#f1f1f1] pl-[6px]">
            <select disabled aria-label="リンクの権限" className="appearance-none bg-transparent text-[17px] text-[#a3a3a3] opacity-100">
              <option>リンクを知っているすべてのユーザーが閲覧可能</option>
            </select>
            <Caret small color="#aaa" />
          </div>
          <button disabled className="h-12 w-[150px] rounded-md bg-[#cbcbcb] whitespace-nowrap text-white">リンクをコピーする</button>
        </div>
        <div className="mt-8 h-px bg-[#eeeeee]" />
        <h2 className="mt-6 leading-7">アクセスできたユーザー</h2>
        <div className="mt-5 flex h-11 items-center">
          <svg width="42" height="42" viewBox="0 0 42 42" aria-hidden="true">
            <defs>
              <linearGradient id="avatarA" x1="0" y1="0.300" x2="1" y2="0.500">
                <stop offset="0" stopColor="#ffd0c0" /><stop offset="0.500" stopColor="#f49bff" /><stop offset="1" stopColor="#5ef2ff" />
              </linearGradient>
              <radialGradient id="avatarB" cx="0.500" cy="1" r="0.600">
                <stop offset="0" stopColor="#f03cff" /><stop offset="1" stopColor="#f03cff" stopOpacity="0" />
              </radialGradient>
            </defs>
            <circle cx="21" cy="21" r="21" fill="url(#avatarA)" />
            <circle cx="21" cy="21" r="21" fill="url(#avatarB)" />
            <g fill="none" stroke="#fff" strokeWidth="1.500"><path d="M21 11h5v5a5 5 0 1 1-5-5zM13 30v-2q0-5 5-5h6q5 0 5 5v2" /></g>
          </svg>
          <span className="ml-3 flex-1 pt-1 text-[17px] font-normal text-[#666]">testforewondershare@outlook.com</span>
          <span className="mr-8 pb-4 text-[18px]">所有者</span>
        </div>
        <div className="mt-[23px] h-px bg-[#eeeeee]" />
        <div className="mt-7 flex h-9 items-center">
          <span className="w-[82px] text-[18px]">共有先</span>
          <div className="flex gap-9">
            <a href="#facebook" aria-label="Facebook"><FaFacebook size={36} color="#1877f2" /></a>
            <a href="#twitter" aria-label="Twitter" className="flex size-9 items-center justify-center rounded-full bg-[#1d9bf0]"><FaTwitter size={21} color="#fff" /></a>
            <a href="#pinterest" aria-label="Pinterest"><FaPinterest size={36} color="#e60023" /></a>
            <a href="#line" aria-label="LINE"><LineLogo /></a>
          </div>
        </div>
      </div>
    </section>
  );
}

/* ---------- callout marks over the page ---------- */

function Callout() {
  return (
    <svg className="pointer-events-none absolute top-0 left-0 h-full w-full" fill="none" stroke="#ed1c24" strokeWidth="5" aria-hidden="true">
      <rect x="733.500" y="185.500" width="751" height="680" />
      <rect x="1872" y="46.500" width="109" height="60" />
      <path d="M1872 106L1486 432" />
    </svg>
  );
}

export default function App() {
  return (
    <div className="relative flex h-screen flex-col overflow-hidden bg-white font-['Noto_Sans','Noto_Sans_CJK_JP',sans-serif] font-[350] [font-feature-settings:'palt']">
      <TitleBar />
      <MenuBar />
      <Ribbon />
      <div className="flex min-h-0 flex-1">
        <Library />
        <Workspace />
        <RightRail />
      </div>
      <StatusBar />
      <ShareDialog />
      <Callout />
    </div>
  );
}
